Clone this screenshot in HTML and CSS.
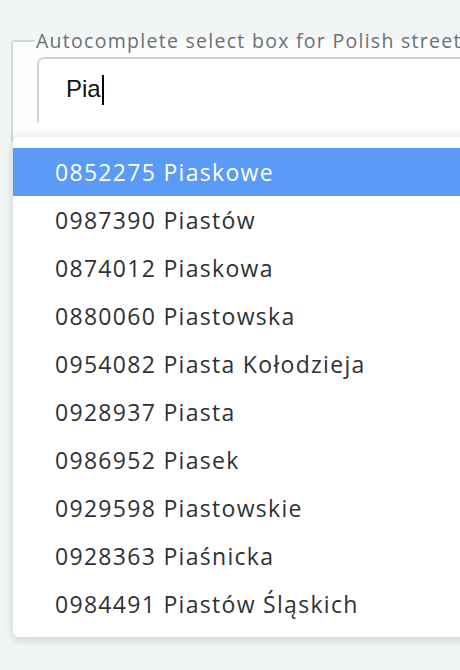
FILE: index.html
```html
<!DOCTYPE html>
<html>
<head>
<meta charset="utf-8">
<link rel="stylesheet" href="styles.css">
</head>
<body>
<div class="page">
  <fieldset class="box">
    <legend class="legend">Autocomplete select box for Polish streets</legend>
    <div class="input"><span class="value">Pia</span><span class="caret"></span></div>
  </fieldset>
  <ul class="menu">
    <li class="item active">0852275 Piaskowe</li>
    <li class="item">0987390 Piastów</li>
    <li class="item">0874012 Piaskowa</li>
    <li class="item">0880060 Piastowska</li>
    <li class="item">0954082 Piasta Kołodzieja</li>
    <li class="item">0928937 Piasta</li>
    <li class="item">0986952 Piasek</li>
    <li class="item">0929598 Piastowskie</li>
    <li class="item">0928363 Piaśnicka</li>
    <li class="item">0984491 Piastów Śląskich</li>
  </ul>
</div>
</body>
</html>
```
FILE: styles.css
```css
html, body {
  margin: 0;
  padding: 0;
  background: #f2f5f6;
  width: 460px;
  height: 670px;
  overflow: hidden;
}
.page {
  position: relative;
  padding: 30px 0 0 11px;
  font-family: "Open Sans", "Noto Sans", sans-serif;
}
.box {
  margin: 0;
  width: 700px;
  height: 112px;
  padding: 0 0 0 24px;
  border: 2px solid #d3d7d9;
  border-radius: 3px;
  background: #fdfefe;
  box-sizing: border-box;
}
.legend {
  padding: 0 1px;
  margin-left: -2px;
  font-size: 19.5px;
  line-height: 22px;
  letter-spacing: 1.28px;
  color: #6b6f72;
  white-space: nowrap;
}
.input {
  margin-top: 5px;
  height: 66px;
  border: 2px solid #d0d3d5;
  border-bottom: 0;
  border-radius: 7px 0 0 0;
  background: #fff;
  padding: 16px 0 0 27px;
  box-sizing: border-box;
  display: flex;
  align-items: flex-start;
  font-family: "Liberation Sans", Arial, sans-serif;
  font-size: 24px;
  line-height: 28px;
  color: #111;
}
.caret {
  display: inline-block;
  width: 2px;
  height: 30px;
  margin-left: 1px;
  background: #000;
}
.menu {
  position: absolute;
  left: 13px;
  top: 137px;
  width: 520px;
  margin: 0;
  padding: 11px 0 9px;
  list-style: none;
  background: #fff;
  border-radius: 5px;
  box-shadow: 0 4px 9px rgba(0, 0, 0, 0.13), 0 -4px 9px rgba(0, 0, 0, 0.06);
}
.item {
  height: 48px;
  line-height: 48px;
  padding-left: 42px;
  font-size: 23px;
  letter-spacing: 1.3px;
  color: #2f3134;
  white-space: nowrap;
}
.item.active {
  background: #5a9bf8;
  color: #fff;
}
```
